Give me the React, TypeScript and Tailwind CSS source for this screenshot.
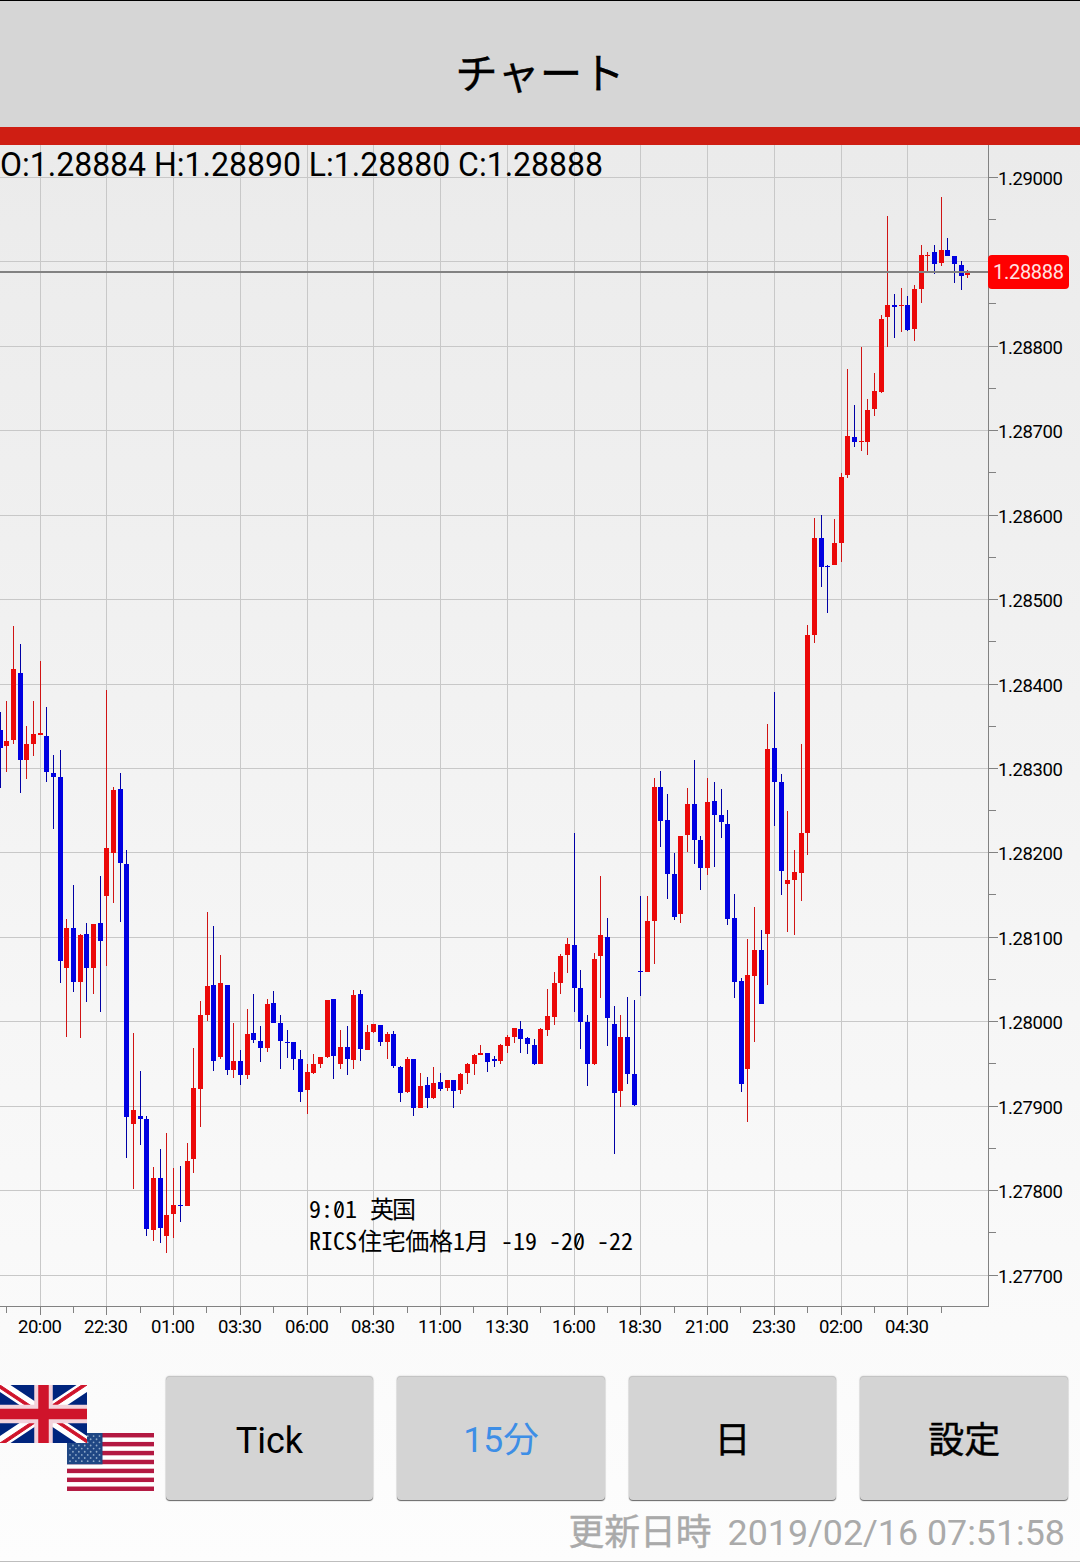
type Candle = ["r" | "b", number, number, number, number];

// direction, high, body top, body bottom, low (pixel rows); one entry per 15 minutes
const candles: Candle[] = [
  ["b", 712, 730, 748, 788], ["r", 701, 741, 746, 772], ["r", 626, 669, 740, 744], ["b", 644, 673, 760, 793],
  ["r", 726, 744, 760, 779], ["r", 701, 734, 744, 756], ["r", 661, 733, 735, 735], ["b", 707, 736, 772, 782],
  ["b", 755, 773, 777, 829], ["b", 750, 777, 961, 983], ["r", 919, 928, 968, 1037], ["b", 885, 928, 982, 992],
  ["r", 934, 935, 982, 1038], ["b", 923, 934, 968, 1002], ["r", 924, 924, 968, 994], ["b", 876, 923, 941, 1012],
  ["r", 690, 848, 896, 966], ["r", 787, 790, 853, 903], ["b", 773, 789, 863, 922], ["b", 850, 864, 1117, 1158],
  ["r", 1033, 1110, 1124, 1189], ["b", 1071, 1116, 1119, 1145], ["b", 1116, 1119, 1229, 1236], ["r", 1167, 1178, 1230, 1241],
  ["b", 1149, 1178, 1228, 1243], ["r", 1133, 1215, 1236, 1253], ["r", 1168, 1205, 1214, 1238], ["b", 1166, 1205, 1206, 1222],
  ["r", 1143, 1161, 1206, 1206], ["r", 1048, 1088, 1159, 1173], ["r", 1001, 1015, 1089, 1127], ["r", 912, 986, 1015, 1021],
  ["b", 926, 985, 1061, 1071], ["r", 955, 983, 1057, 1059], ["b", 985, 985, 1070, 1075], ["r", 1023, 1061, 1070, 1078],
  ["b", 1050, 1061, 1075, 1085], ["r", 1009, 1034, 1075, 1079], ["b", 994, 1033, 1040, 1043], ["b", 1026, 1041, 1048, 1062],
  ["r", 999, 1004, 1048, 1052], ["b", 991, 1003, 1023, 1023], ["b", 1015, 1023, 1041, 1069], ["b", 1030, 1042, 1043, 1058],
  ["b", 1042, 1042, 1059, 1070], ["b", 1050, 1059, 1092, 1102], ["r", 1064, 1072, 1090, 1114], ["r", 1054, 1064, 1073, 1074],
  ["r", 1057, 1057, 1064, 1068], ["r", 1000, 1000, 1057, 1058], ["b", 999, 999, 1056, 1079], ["r", 1030, 1047, 1064, 1069],
  ["b", 1026, 1047, 1059, 1075], ["r", 990, 995, 1060, 1069], ["b", 990, 994, 1049, 1061], ["r", 1025, 1032, 1050, 1050],
  ["r", 1024, 1024, 1032, 1033], ["b", 1025, 1025, 1042, 1046], ["r", 1032, 1034, 1042, 1059], ["b", 1031, 1034, 1066, 1068],
  ["b", 1066, 1067, 1093, 1102], ["r", 1057, 1059, 1092, 1093], ["b", 1059, 1059, 1108, 1116], ["r", 1073, 1086, 1108, 1108],
  ["b", 1077, 1085, 1098, 1108], ["r", 1067, 1083, 1098, 1099], ["b", 1073, 1082, 1089, 1091], ["r", 1080, 1080, 1088, 1091],
  ["b", 1080, 1080, 1091, 1108], ["r", 1073, 1074, 1090, 1094], ["r", 1063, 1064, 1073, 1084], ["r", 1054, 1055, 1064, 1075],
  ["r", 1045, 1053, 1055, 1055], ["b", 1053, 1053, 1062, 1072], ["b", 1056, 1059, 1061, 1067], ["r", 1044, 1045, 1061, 1064],
  ["r", 1035, 1037, 1046, 1053], ["r", 1028, 1028, 1037, 1043], ["b", 1021, 1029, 1039, 1053], ["b", 1037, 1038, 1044, 1054],
  ["b", 1039, 1045, 1064, 1065], ["r", 1028, 1029, 1064, 1064], ["r", 989, 1016, 1030, 1036], ["r", 972, 983, 1017, 1025],
  ["r", 954, 956, 983, 994], ["r", 938, 944, 955, 973], ["b", 833, 945, 988, 1012], ["b", 970, 988, 1022, 1049],
  ["b", 1015, 1022, 1064, 1086], ["r", 953, 959, 1064, 1065], ["r", 876, 935, 956, 998], ["b", 918, 937, 1018, 1046],
  ["b", 1006, 1024, 1093, 1154], ["r", 1015, 1037, 1091, 1107], ["b", 997, 1037, 1074, 1084], ["b", 1000, 1074, 1105, 1106],
  ["b", 896, 971, 972, 996], ["r", 896, 921, 972, 972], ["r", 778, 787, 921, 964], ["b", 771, 787, 821, 847],
  ["b", 794, 820, 874, 899], ["b", 853, 874, 917, 920], ["r", 836, 836, 914, 923], ["r", 788, 804, 835, 852],
  ["b", 760, 804, 840, 864], ["b", 836, 840, 868, 890], ["r", 778, 802, 868, 875], ["b", 782, 801, 815, 867],
  ["b", 789, 815, 822, 838], ["b", 810, 824, 919, 925], ["b", 894, 918, 982, 998], ["b", 978, 981, 1084, 1092],
  ["r", 939, 975, 1069, 1122], ["r", 907, 950, 976, 1042], ["b", 930, 950, 1004, 1004], ["r", 724, 749, 934, 985],
  ["b", 692, 748, 782, 826], ["b", 774, 782, 871, 895], ["r", 811, 880, 884, 932], ["r", 850, 872, 880, 935],
  ["r", 744, 833, 873, 901], ["r", 625, 635, 833, 855], ["r", 518, 538, 635, 643], ["b", 515, 538, 567, 587],
  ["b", 565, 566, 567, 613], ["r", 519, 543, 565, 565], ["r", 473, 477, 543, 562], ["r", 369, 436, 475, 478],
  ["b", 405, 437, 442, 447], ["r", 347, 441, 442, 451], ["r", 399, 410, 442, 455], ["r", 373, 391, 409, 416],
  ["r", 315, 319, 392, 393], ["r", 216, 305, 317, 347], ["b", 294, 305, 307, 338], ["r", 288, 305, 306, 332],
  ["b", 296, 305, 330, 331], ["r", 285, 289, 329, 341], ["r", 245, 255, 289, 303], ["r", 252, 255, 256, 271],
  ["b", 245, 252, 264, 274], ["r", 197, 250, 263, 266], ["b", 238, 250, 256, 256], ["b", 256, 256, 264, 283],
  ["b", 261, 265, 276, 290], ["r", 270, 273, 275, 278],
];

const columnX = (i: number) => Math.floor(40.15 + 6.675 * (i - 6));

const priceRows: [number, string][] = [
  [177, "1.29000"], [261, ""], [346, "1.28800"], [430, "1.28700"], [515, "1.28600"], [599, "1.28500"], [684, "1.28400"],
  [768, "1.28300"], [852, "1.28200"], [937, "1.28100"], [1021, "1.28000"], [1106, "1.27900"], [1190, "1.27800"], [1275, "1.27700"],
];

const timeColumns: [number, string][] = [
  [40, "20:00"], [106, "22:30"], [173, "01:00"], [240, "03:30"], [307, "06:00"], [373, "08:30"], [440, "11:00"],
  [507, "13:30"], [574, "16:00"], [640, "18:30"], [707, "21:00"], [774, "23:30"], [841, "02:00"], [907, "04:30"],
];

const minorTicks = [6, 73, 140, 206, 273, 340, 407, 473, 540, 607, 674, 740, 807, 874, 941];

const NOTE = "[font-feature-settings:'hwid'] font-['Noto_Sans_CJK_JP',sans-serif] text-[24px]";

function CandleChart() {
  return (
    <svg className="block h-[1217px] w-[1080px] font-[Roboto,sans-serif]" viewBox="0 145 1080 1217">
      <g fill="#c8c8c8" shapeRendering="crispEdges">
        {priceRows.map(([y]) => <rect key={y} x="0" y={y} width="988" height="1" />)}
        {timeColumns.map(([x]) => <rect key={x} x={x} y="145" width="1" height="1161" />)}
      </g>
      <g shapeRendering="crispEdges">
        {candles.map(([dir, high, top, bottom, low], i) => {
          const x = columnX(i);
          return (
            <g key={i}>
              <rect x={x} y={high} width="1" height={Math.max(low - high, 1)} fill={dir === "r" ? "#d01414" : "#0000a5"} />
              <rect x={x - 2} y={top} width="5" height={Math.max(bottom - top, 1)} fill={dir === "r" ? "#eb0909" : "#0000e1"} />
            </g>
          );
        })}
      </g>
      <g fill="#828282" shapeRendering="crispEdges">
        <rect x="0" y="271" width="988" height="2" />
        <rect x="988" y="145" width="1" height="1162" />
        <rect x="0" y="1306" width="989" height="1" />
        {priceRows.map(([y]) => <rect key={y} x="988" y={y} width="10" height="1" />)}
        {priceRows.slice(0, -1).map(([y]) => <rect key={y} x="988" y={y + 42} width="8" height="1" />)}
        {timeColumns.map(([x]) => <rect key={x} x={x} y="1306" width="1" height="9" />)}
        {minorTicks.map((x) => <rect key={x} x={x} y="1306" width="1" height="7" />)}
      </g>
      <g fill="#000" className="text-[18.5px]">
        {priceRows.map(([y, label]) => (
          <text key={y} x="998" y={y + 8} textLength={label ? 65 : undefined}>{label}</text>
        ))}
        {timeColumns.map(([x, label]) => (
          <text key={x} x={x} y="1333" textAnchor="middle" textLength="44">{label}</text>
        ))}
      </g>
      <rect x="988" y="255" width="81" height="34" rx="4" fill="#ff0000" />
      <text x="993" y="279" fill="#ffe3e3" className="text-[20px]" textLength="71">1.28888</text>
      <text x="0" y="175.5" className="text-[32.5px]" textLength="603" lengthAdjust="spacingAndGlyphs">O:1.28884 H:1.28890 L:1.28880 C:1.28888</text>
      <g className={NOTE} xmlSpace="preserve">
        <text x="309" y="1218">9:01</text>
        <text x="370" y="1218" textLength="46">英国</text>
        <text x="309" y="1250">RICS</text>
        <text x="358" y="1250" textLength="95">住宅価格</text>
        <text x="453" y="1250">1月</text>
        <text x="501" y="1250">-19</text>
        <text x="549" y="1250">-20</text>
        <text x="597" y="1250">-22</text>
        <path d="M336 1215 L341 1203 M576 1247 L581 1235" stroke="#000" strokeWidth="1.3" />
      </g>
    </svg>
  );
}

function UsFlag() {
  return (
    <svg className="absolute top-12 left-[67px] h-[58px] w-[87px]" viewBox="0 0 87 58" preserveAspectRatio="none">
      <rect width="87" height="58" fill="#fff" />
      {[0, 1, 2, 3, 4, 5, 6].map((i) => <rect key={i} y={i * 8.92} width="87" height="4.46" fill="#b31942" />)}
      <rect width="35.5" height="31.3" fill="#1f4784" />
      {[0, 1, 2, 3, 4, 5, 6, 7, 8].map((r) =>
        Array.from({ length: r % 2 ? 5 : 6 }, (_, c) => (
          <circle key={`${r}-${c}`} cx={3 + c * 5.9 + (r % 2 ? 2.95 : 0)} cy={3.1 + r * 3.13} r="0.9" fill="#8fa9c8" />
        )),
      )}
    </svg>
  );
}

function UkFlag() {
  return (
    <svg className="absolute top-0 left-0 h-[58px] w-[87px]" viewBox="0 0 87 58" preserveAspectRatio="none">
      <rect width="87" height="58" fill="#00247d" />
      <path d="M0 0L87 58M87 0L0 58" stroke="#fff" strokeWidth="11.6" />
      <path d="M0 0L43.5 29L42.4 31.5L-2 2ZM87 0L43.5 29L42.4 26.5L84 -1.5ZM87 58L43.5 29L44.6 26.5L89 56ZM0 58L43.5 29L44.6 31.5L3 59.5Z" fill="#cf142b" stroke="#cf142b" strokeWidth="1" />
      <path d="M43.5 0V58M0 29H87" stroke="#f3d3dc" strokeWidth="18.5" />
      <path d="M43.5 0V58M0 29H87" stroke="#cf142b" strokeWidth="10.5" />
    </svg>
  );
}

function BarButton({ label, active = false }: { label: string; active?: boolean }) {
  const weight = label === "Tick" || active ? "" : "[-webkit-text-stroke:0.4px]";
  return (
    <button
      className={`flex h-[124px] flex-1 items-center justify-center rounded-[4px] border-t border-[#c4c4c4] bg-[#d4d4d4] pt-[4px] leading-none shadow-[0_1px_1px_#666,0_0_2px_rgba(0,0,0,0.2)] ${weight} ${active ? "text-[35.5px] text-[#3d8ee6]" : "text-[36px] text-black"}`}
    >
      {label}
    </button>
  );
}

export default function App() {
  return (
    <div className="flex h-[1562px] w-[1080px] flex-col overflow-hidden border-b border-[#bdbdbd] bg-[#fcfcfc] font-[Roboto,'Noto_Sans_CJK_JP',sans-serif] text-black">
      <header className="flex h-[145px] shrink-0 items-center justify-center border-t border-b-[18px] border-t-black border-b-[#cf1e13] bg-[#d6d6d6] pt-[22px]">
        <h1 className="text-[42.5px] leading-none [-webkit-text-stroke:0.3px]">チャート</h1>
      </header>
      <main className="flex flex-1 flex-col bg-linear-to-b from-[#ebebeb] to-[#fdfdfd]">
        <CandleChart />
        <nav className="flex pt-[14px] pr-3">
          <div className="relative mt-[9px] h-[106px] w-[165.6px] shrink-0">
            <UsFlag />
            <UkFlag />
          </div>
          <div className="flex flex-1 gap-6">
            <BarButton label="Tick" />
            <BarButton label="15分" active />
            <BarButton label="日" />
            <BarButton label="設定" />
          </div>
        </nav>
        <div className="flex justify-end gap-4 pt-[15px] pr-[15px] text-[35.8px] leading-[36px] text-[#aaa]">
          <span className="[-webkit-text-stroke:0.4px]">更新日時</span>
          <span>2019/02/16 07:51:58</span>
        </div>
      </main>
    </div>
  );
}
